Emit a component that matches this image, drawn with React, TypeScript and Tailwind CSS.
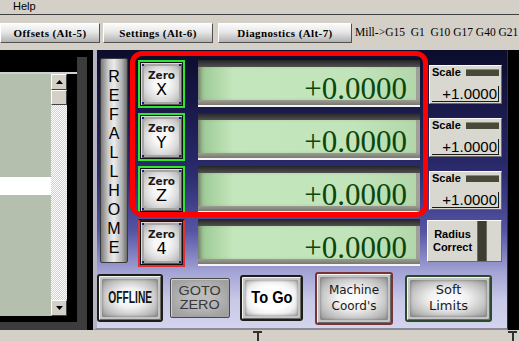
const sans = "font-['Liberation_Sans',Arial,sans-serif]";
const serif = "font-['Liberation_Serif','Times_New_Roman',serif]";
const deja = "font-['DejaVu_Sans',Verdana,sans-serif]";

function TabButton({ label, className }: { label: string; className: string }) {
  return (
    <div
      className={`${className} h-[20px] flex items-center justify-center border border-t-white border-l-white border-r-[#505050] border-b-[#505050] bg-[linear-gradient(to_bottom,#fbfbfb,#e6e6e6_45%,#b2b2b2)] ${serif} text-[11px] font-bold tracking-[0.4px] text-black`}
    >
      {label}
    </div>
  );
}

function ZeroButton({ axis, ring }: { axis: string; ring: string }) {
  return (
    <div className={`w-[47px] h-[48px] border-2 ${ring} bg-[#111111] p-[1px]`}>
      <div className="relative w-full h-full bg-[#a6a6a6] p-[3px] shadow-[inset_1px_1px_0_#dadada,inset_-1px_-1px_0_#5a5a5a]">
        <span className="absolute top-[1px] left-[1px] w-[2px] h-[2px] bg-[#1c1c8a]" />
        <span className="absolute top-[1px] right-[1px] w-[2px] h-[2px] bg-[#1c1c8a]" />
        <span className="absolute bottom-[1px] left-[1px] w-[2px] h-[2px] bg-[#1c1c8a]" />
        <span className="absolute bottom-[1px] right-[1px] w-[2px] h-[2px] bg-[#1c1c8a]" />
        <div className="w-full h-full rounded-[4px] bg-[radial-gradient(ellipse_at_center,#f8f8f8_30%,#dcdcdc_65%,#b2b2b2_100%)] flex flex-col items-center justify-center">
          <span className={`${deja} text-[10.5px] font-bold leading-[12px] text-[#1a1a1a]`}>Zero</span>
          <span className={`${deja} text-[16px] leading-[18px] text-black`}>{axis}</span>
        </div>
      </div>
    </div>
  );
}

function Dro() {
  return (
    <div className="ml-[13px] w-[222px] h-[47px] flex flex-col">
      <div className="h-[7px] bg-[linear-gradient(to_bottom,#242424,#505050)]" />
      <div className="flex-1 flex items-end justify-end pr-[13px] bg-[linear-gradient(to_right,#98c690,#c4e6bc_16%,#c2e4ba_70%,#b2d6aa)] shadow-[inset_5px_0_5px_-3px_#6e6e66,inset_-4px_0_0_#a0a098]">
        <span className={`${serif} text-[31px] leading-[22px] text-[#0b470b]`}>+0.0000</span>
      </div>
      <div className="h-[5px] bg-[linear-gradient(to_bottom,#9c9c92,#787870)]" />
      <div className="h-[2px] bg-[#f4f4f4]" />
    </div>
  );
}

function ScaleBox() {
  return (
    <div className="ml-[9px] mt-[5px] w-[73px] h-[39px] bg-[#d8d8d0] border border-t-[#fafafa] border-l-[#fafafa] border-r-[#6a6a6a] border-b-[#6a6a6a] px-[2px] pt-[1px] pb-[1px] flex flex-col justify-between">
      <div className="flex items-center justify-between">
        <span className={`${sans} text-[11px] font-bold leading-[11px] text-black`}>Scale</span>
        <span className="w-[33px] h-[7px] bg-[#49493a] border-t border-[#8a8a78]" />
      </div>
      <div className={`border-b border-r border-[#1a1a1a] text-right pr-[1px] ${sans} text-[15px] leading-[15px] text-black`}>
        +1.0000
      </div>
    </div>
  );
}

function RadiusBox() {
  return (
    <div className="ml-[7px] mt-[1px] w-[75px] h-[42px] bg-[#d8d8d0] border border-t-[#fafafa] border-l-[#fafafa] border-r-[#6a6a6a] border-b-[#6a6a6a] flex">
      <div className={`flex-1 flex flex-col items-center justify-center ${sans} text-[11px] font-bold leading-[13px] text-black`}>
        <span>Radius</span>
        <span>Correct</span>
      </div>
      <div className="w-[10px] mr-[14px] h-full bg-[#3e3e30] border-x border-[#6e6e5e]" />
    </div>
  );
}

function Big({
  className,
  frame,
  face,
  children,
}: {
  className: string;
  frame: string;
  face: string;
  children: React.ReactNode;
}) {
  return (
    <div className={`${className} rounded-[3px] border-2 ${frame} bg-[#c4c4c4] p-[3px] shadow-[inset_1px_1px_0_#f4f4f4,inset_-1px_-1px_0_#6a6a6a]`}>
      <div className={`w-full h-full rounded-[2px] ${face} flex flex-col items-center justify-center shadow-[inset_0_0_3px_#707070]`}>
        {children}
      </div>
    </div>
  );
}

const whiteFace = "bg-[radial-gradient(ellipse_at_center,#ffffff_0%,#f2f2f2_35%,#bcbcbc_75%,#8e8e8e_100%)]";

function Arrow({ up }: { up?: boolean }) {
  return (
    <div className="h-[16px] bg-[#d4d0c8] border border-t-white border-l-white border-r-[#404040] border-b-[#404040] flex items-center justify-center">
      <svg width="7" height="4" viewBox="0 0 7 4">
        <path d={up ? "M3.5 0 L7 4 L0 4 Z" : "M0 0 L7 0 L3.5 4 Z"} fill="#000" />
      </svg>
    </div>
  );
}

export default function App() {
  return (
    <div className="w-[519px] h-[341px] overflow-hidden bg-[#d4d0c8] flex flex-col">
      {/* menu bar */}
      <div className="h-[15px] shrink-0 pl-[13px] border-b border-[#404040]">
        <div className={`${sans} text-[11px] leading-[12px] text-black`}>Help</div>
      </div>

      {/* tab row */}
      <div className="h-[35px] shrink-0 pt-[8px] flex items-start">
        <TabButton label="Offsets (Alt-5)" className="w-[100px]" />
        <TabButton label="Settings (Alt-6)" className="ml-[3px] w-[110px]" />
        <TabButton label="Diagnostics (Alt-7)" className="ml-[5px] w-[134px]" />
        <div className={`ml-[3px] h-[20px] flex items-center whitespace-nowrap ${serif} text-[11.5px] text-black`}>
          Mill-&gt;G15&nbsp;&nbsp;G1&nbsp;&nbsp;G10 G17 G40 G21
        </div>
      </div>

      {/* main */}
      <div className="h-[280px] shrink-0 flex">
        {/* left listbox area */}
        <div className="w-[93px] bg-black flex">
          <div className="w-[77px] flex flex-col">
            <div className="h-[22px]" />
            <div className="h-[244px] flex border-t-2 border-[#d0d0d0]">
              <div className="w-[51px] bg-[#b4bfae] flex flex-col">
                <div className="h-[103px]" />
                <div className="h-[18px] bg-white" />
              </div>
              <div className="w-[16px] flex flex-col">
                <Arrow up />
                <div className="h-[15px] bg-[#d4d0c8] border border-t-white border-l-white border-r-[#404040] border-b-[#404040]" />
                <div className="flex-1 bg-[image:repeating-conic-gradient(#d4d0c8_0_25%,#ffffff_0_50%)] bg-[length:2px_2px]" />
                <Arrow />
              </div>
            </div>
            <div className="h-[6px]" />
            <div className="mt-auto h-[8px] bg-[#3c3c3c]" />
          </div>
          <div className="w-[10px] flex flex-col">
            <div className="h-[7px]" />
            <div className="flex-1 bg-[#3c3c3c]" />
          </div>
        </div>

        {/* blue panel */}
        <div className="relative w-[415px] h-[280px] border-l-4 border-l-[#b4b4c4] border-r border-r-[#303030] border-b-2 border-b-[#8a8a98] bg-[linear-gradient(to_bottom,#0c0c2c_0%,#1a1a4c_22%,#2c2c70_45%,#5454a4_65%,#a4a4d6_80%,#c8c8e8_90%,#d4d4ee_100%)] flex flex-col">
          <div className="h-[217px] flex pt-[8px] pl-[3px]">
            <div className="w-[28px] h-[205px] rounded-[2px] border border-[#3a3a3a] bg-[linear-gradient(to_right,#7a7a7a,#d0d0d0_30%,#ececec_50%,#b4b4b4_80%,#6c6c6c)] flex flex-col items-center pt-[8px]">
              {["R", "E", "F", "A", "L", "L", "H", "O", "M", "E"].map((c, i) => (
                <span key={i} className={`${sans} text-[16px] leading-[19px] text-black`}>
                  {c}
                </span>
              ))}
            </div>
            <div className="ml-[10px] mt-[2px] flex flex-col gap-[5px]">
              {["X", "Y", "Z"].map((a) => (
                <div key={a} className="h-[48px] flex items-start">
                  <ZeroButton axis={a} ring="border-[#2ee62e]" />
                  <Dro />
                  <ScaleBox />
                </div>
              ))}
              <div className="h-[48px] flex items-start">
                <ZeroButton axis="4" ring="border-[#e23030] border-t-[#3a1010]" />
                <Dro />
                <RadiusBox />
              </div>
            </div>
          </div>

          {/* bottom buttons */}
          <div className="mt-[3px] h-[56px] flex items-center">
            <Big className="w-[66px] h-[48px]" frame="border-[#1e1e18]" face={whiteFace}>
              <span className={`${sans} text-[16px] font-bold leading-[16px] text-[#111] inline-block scale-x-[0.64]`}>OFFLINE</span>
            </Big>
            <div className="ml-[7px] w-[60px] h-[40px] rounded-[2px] border border-[#4a4a4a] bg-[#a2a2a2] p-[2px] shadow-[inset_1px_1px_0_#d0d0d0]">
              <div className="w-full h-full bg-[radial-gradient(ellipse_at_center,#bcbcbc_30%,#9c9c9c_100%)] flex flex-col items-center justify-center">
                <span className={`${sans} text-[12px] leading-[14px] text-[#383838] inline-block scale-x-[1.2]`}>GOTO</span>
                <span className={`${sans} text-[12px] leading-[14px] text-[#383838] inline-block scale-x-[1.2]`}>ZERO</span>
              </div>
            </div>
            <Big className="ml-[10px] w-[63px] h-[46px]" frame="border-[#1e1e18]" face="bg-[radial-gradient(ellipse_at_center,#ffffff_45%,#eeeeee_70%,#b0b0b0_100%)]">
              <span className={`${sans} text-[17px] font-bold leading-[18px] text-black inline-block scale-x-[0.86]`}>To Go</span>
            </Big>
            <Big className="ml-[12px] w-[78px] h-[53px]" frame="border-[#7a3434]" face={whiteFace}>
              <span className={`${deja} text-[12px] leading-[16px] text-[#1a1a1a]`}>Machine</span>
              <span className={`${deja} text-[12px] leading-[16px] text-[#1a1a1a]`}>Coord's</span>
            </Big>
            <Big className="ml-[12px] w-[87px] h-[47px]" frame="border-[#2a4a2a]" face={whiteFace}>
              <span className={`${deja} text-[13px] leading-[16px] text-[#1a1a1a]`}>Soft</span>
              <span className={`${deja} text-[13px] leading-[16px] text-[#1a1a1a]`}>Limits</span>
            </Big>
          </div>

          {/* red highlight around X/Y/Z */}
          <div className="absolute left-[33px] top-[1px] w-[298px] h-[166px] rounded-[12px] border-[5px] border-[#ff0000] pointer-events-none" />
        </div>

        <div className="flex-1 bg-black" />
      </div>

      {/* status bar */}
      <div className="h-[11px] shrink-0 flex">
        <div className="w-[253px]" />
        <div className="w-[9px] flex flex-col items-center">
          <div className="w-[9px] h-[2px] bg-[#303030] mt-[1px]" />
          <div className="w-[2px] flex-1 bg-[#303030]" />
        </div>
        <div className="w-[246px]" />
        <div className="w-[9px] flex flex-col items-center">
          <div className="w-[9px] h-[2px] bg-[#303030] mt-[1px]" />
          <div className="w-[2px] flex-1 bg-[#303030]" />
        </div>
      </div>
    </div>
  );
}
